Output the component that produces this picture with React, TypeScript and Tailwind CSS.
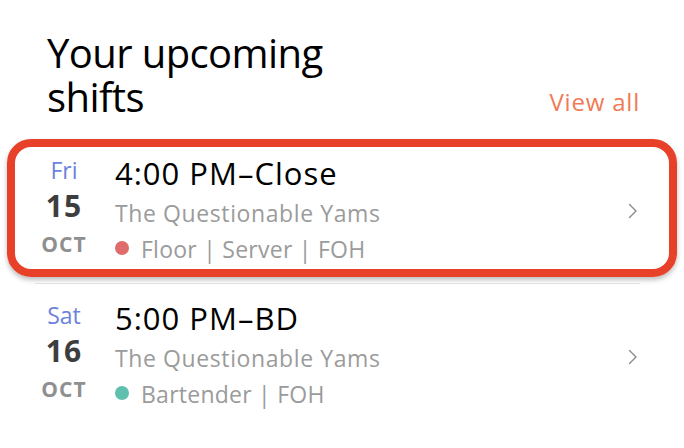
import React from 'react';

interface ShiftRowProps {
  day: string;
  date: string;
  month: string;
  time: string;
  place: string;
  roles: string;
  dotClass: string;
  highlighted?: boolean;
}

const Chevron = () => (
  <svg width="10" height="16" viewBox="0 0 10 16" fill="none" className="text-[#8a8a8a]">
    <path d="M1.5 1.5L8 8L1.5 14.5" stroke="currentColor" strokeWidth="1.4" strokeLinecap="round" strokeLinejoin="round" />
  </svg>
);

const ShiftRow: React.FC<ShiftRowProps> = ({ day, date, month, time, place, roles, dotClass, highlighted = false }) => {
  return (
    <div
      className={`flex items-start ${
        highlighted
          ? 'mx-[7px] h-[138px] rounded-[24px] border-[8px] border-[#e8412a] shadow-[0_3px_5px_rgba(0,0,0,0.25)] pt-[6px] pl-[21px] pr-[31px]'
          : 'h-[132px] pt-[14px] pl-[36px] pr-[46px]'
      }`}
    >
      <div className="w-[56px] flex flex-col items-center">
        <span className="text-[23px] leading-[34px] text-[#6c83dc]">{day}</span>
        <span className="text-[30px] leading-[38px] font-bold tracking-[1px] text-[#3d3d3d]">{date}</span>
        <span className="text-[21px] leading-[38px] font-bold tracking-[1px] text-[#8f8f8f]">{month}</span>
      </div>
      <div className="flex-1 ml-[23px] flex flex-col">
        <span className="text-[31px] leading-[40px] tracking-[1px] text-black">{time}</span>
        <span className="mt-[2px] text-[23px] leading-[36px] tracking-[0.6px] text-[#9b9b9b]">{place}</span>
        <span className="flex items-center text-[23px] leading-[36px] tracking-[0.25px] text-[#9b9b9b]">
          <span className={`w-[14px] h-[14px] rounded-full mr-[12px] -mt-[3px] ${dotClass}`} />
          {roles}
        </span>
      </div>
      <div className="self-stretch flex items-center">
        <Chevron />
      </div>
    </div>
  );
};

export default function App() {
  return (
    <div className="w-[684px] h-[448px] bg-white overflow-hidden" style={{ fontFamily: '"Open Sans", sans-serif' }}>
      <div className="flex items-end justify-between pl-[47px] pr-[44px] pt-[31px]">
        <h2 className="text-[40px] leading-[44px] tracking-[-0.6px] text-black font-normal">
          Your upcoming
          <br />
          shifts
        </h2>
        <span className="text-[24px] leading-[30px] tracking-[0.8px] text-[#f07a55] mb-[2px]">View all</span>
      </div>
      <div className="mt-[20px]">
        <ShiftRow
          highlighted
          day="Fri"
          date="15"
          month="OCT"
          time="4:00 PM–Close"
          place="The Questionable Yams"
          roles="Floor | Server | FOH"
          dotClass="bg-[#e06b6b]"
        />
        <div className="ml-[35px] mr-[44px] mt-[6px] h-px bg-[#e2e2e2]" />
        <ShiftRow
          day="Sat"
          date="16"
          month="OCT"
          time="5:00 PM–BD"
          place="The Questionable Yams"
          roles="Bartender | FOH"
          dotClass="bg-[#5fc0b0]"
        />
      </div>
    </div>
  );
}
